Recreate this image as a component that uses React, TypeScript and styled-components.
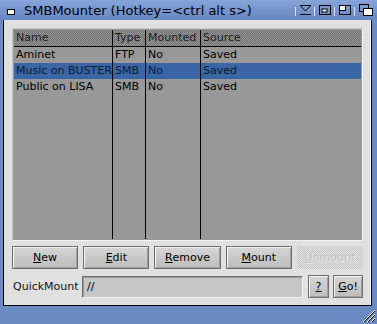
import styled, { createGlobalStyle } from 'styled-components'

const GlobalStyle = createGlobalStyle`
  html, body {
    margin: 0;
    padding: 0;
    background: #6c8cc6;
  }
  * {
    box-sizing: border-box;
  }
`

const Window = styled.div`
  width: 377px;
  height: 324px;
  display: flex;
  flex-direction: column;
  background: #6b8bc5;
  font-family: 'DejaVu Sans', 'Liberation Sans', sans-serif;
  font-size: 11px;
  color: #000;
`

const TitleBar = styled.div`
  height: 20px;
  display: flex;
  align-items: center;
  padding-left: 7px;
  background: linear-gradient(#86a4d8, #6686c2);
`

const CloseGadget = styled.div`
  width: 8px;
  height: 6px;
  margin-top: 4px;
  border: 1px solid #000;
  background: #fff;
`

const Title = styled.div`
  flex: 1;
  margin-left: 9px;
  white-space: nowrap;
  font-size: 13px;
`

const Gadgets = styled.div`
  display: flex;
  align-items: center;
  height: 100%;
`

const GadgetSep = styled.div`
  width: 1px;
  height: 9px;
  margin-top: 3px;
  background: #d8e2f4;
`

const Gadget = styled.div<{ $w: number }>`
  width: ${({ $w }) => $w}px;
  height: 20px;
  display: flex;
  align-items: center;
  justify-content: center;
`

const Body = styled.div`
  flex: 1;
  display: flex;
  flex-direction: column;
  gap: 4px;
  margin: 0 5px 0 3px;
  padding: 8px 8px 7px 8px;
  background: #e0e0e0;
  border-left: 1px solid #000;
  border-right: 1px solid #000;
  border-bottom: 1px solid #000;
  box-shadow: inset -1px 0 #fff;
`

const List = styled.div`
  flex: 1;
  display: flex;
  padding: 1px;
  background: #989898;
  border-top: 1px solid #c8c8c8;
  border-left: 1px solid #c8c8c8;
  border-right: 1px solid #f4f4f4;
  border-bottom: 1px solid #f4f4f4;
`

const Column = styled.div<{ $w?: number; $last?: boolean }>`
  ${({ $w }) => ($w ? `width: ${$w}px;` : 'flex: 1;')}
  display: flex;
  flex-direction: column;
  border-right: ${({ $last }) => ($last ? 'none' : '1px solid #000')};
`

const HeaderCell = styled.div`
  height: 17px;
  line-height: 16px;
  padding-left: 2px;
  color: #1a1a1a;
  background-color: #868686;
  background-image: repeating-conic-gradient(#9a9a9a 0% 25%, #6e6e6e 0% 50%);
  background-size: 2px 2px;
  border-bottom: 1px solid #000;
  white-space: nowrap;
  overflow: hidden;
`

const Cell = styled.div<{ $selected?: boolean }>`
  height: 16px;
  line-height: 16px;
  padding-left: 2px;
  white-space: nowrap;
  overflow: hidden;
  color: ${({ $selected }) => ($selected ? '#0c1a30' : '#000')};
  background: ${({ $selected }) => ($selected ? '#3b66a6' : 'transparent')};
`

const ButtonRow = styled.div`
  display: flex;
  gap: 5px;
  margin-top: 1px;
`

const Button = styled.div<{ $w?: number; $disabled?: boolean }>`
  ${({ $w }) => ($w ? `width: ${$w}px;` : 'flex: 1;')}
  height: 23px;
  display: flex;
  align-items: center;
  justify-content: center;
  color: ${({ $disabled }) => ($disabled ? '#c4c4c4' : '#000')};
  border: 1px solid ${({ $disabled }) => ($disabled ? 'transparent' : '#6e6e6e')};
  background: ${({ $disabled }) =>
    $disabled
      ? 'repeating-conic-gradient(#c6c6c6 0% 25%, #e2e2e2 0% 50%) 0 0 / 2px 2px'
      : 'linear-gradient(#d6d6d6, #bdbdbd)'};
  box-shadow: ${({ $disabled }) =>
    $disabled ? 'none' : 'inset 1px 1px #f2f2f2, inset -1px -1px #a0a0a0'};
  text-shadow: ${({ $disabled }) => ($disabled ? '1px 1px #e8e8e8' : 'none')};
`

const Key = styled.span`
  text-decoration: underline;
`

const QuickRow = styled.div`
  display: flex;
  align-items: center;
  gap: 4px;
  margin-top: 2px;
`

const Label = styled.div`
  width: 66px;
  padding-left: 1px;
  white-space: nowrap;
  color: #111;
`

const Input = styled.div`
  flex: 1;
  height: 22px;
  margin-right: 1px;
  padding-left: 4px;
  display: flex;
  align-items: center;
  background: #c6c6c6;
  border-top: 1px solid #6e6e6e;
  border-left: 1px solid #6e6e6e;
  border-right: 1px solid #f4f4f4;
  border-bottom: 1px solid #f4f4f4;
  box-shadow: inset 1px 1px #999;
`

const BottomBorder = styled.div`
  height: 18px;
  display: flex;
  justify-content: flex-end;
  align-items: flex-end;
  padding: 0 1px 1px 0;
`

const columns = [
  { title: 'Name', w: 99, key: 'name' },
  { title: 'Type', w: 33, key: 'type' },
  { title: 'Mounted', w: 55, key: 'mounted' },
  { title: 'Source', key: 'source' },
] as const

const rows = [
  { name: 'Aminet', type: 'FTP', mounted: 'No', source: 'Saved' },
  { name: 'Music on BUSTER', type: 'SMB', mounted: 'No', source: 'Saved', selected: true },
  { name: 'Public on LISA', type: 'SMB', mounted: 'No', source: 'Saved' },
]

const App = () => {
  return (
    <>
      <GlobalStyle />
      <Window>
        <TitleBar>
          <CloseGadget />
          <Title>SMBMounter (Hotkey=&lt;ctrl alt s&gt;)</Title>
          <Gadgets>
            <GadgetSep />
            <Gadget $w={18}>
              <svg width="11" height="10" viewBox="0 0 11 10">
                <path d="M0 0.5H11M0.5 1L5.5 6L10.5 1M0 9.5H11" stroke="#000" fill="none" />
              </svg>
            </Gadget>
            <GadgetSep />
            <Gadget $w={19}>
              <svg width="12" height="10" viewBox="0 0 12 10">
                <rect x="0.5" y="0.5" width="11" height="9" fill="none" stroke="#000" />
                <rect x="3" y="4" width="5" height="3" fill="#fff" stroke="#000" />
              </svg>
            </Gadget>
            <GadgetSep />
            <Gadget $w={19}>
              <svg width="12" height="10" viewBox="0 0 12 10">
                <rect x="0.5" y="0.5" width="11" height="9" fill="none" stroke="#000" />
                <path d="M1 1H6V5H1Z" fill="#fff" />
                <path d="M6.5 1V5.5H1" stroke="#000" fill="none" />
              </svg>
            </Gadget>
            <GadgetSep />
            <Gadget $w={22}>
              <svg width="14" height="12" viewBox="0 0 14 12">
                <rect x="0.5" y="0.5" width="9" height="7" fill="none" stroke="#000" />
                <rect x="4.5" y="4.5" width="9" height="7" fill="#fff" stroke="#000" />
              </svg>
            </Gadget>
          </Gadgets>
        </TitleBar>
        <Body>
          <List>
            {columns.map((col, i) => (
              <Column key={col.key} $w={'w' in col ? col.w : undefined} $last={i === columns.length - 1}>
                <HeaderCell>{col.title}</HeaderCell>
                {rows.map((row) => (
                  <Cell key={row.name} $selected={row.selected}>
                    {row[col.key]}
                  </Cell>
                ))}
              </Column>
            ))}
          </List>
          <ButtonRow>
            <Button><Key>N</Key>ew</Button>
            <Button><Key>E</Key>dit</Button>
            <Button><Key>R</Key>emove</Button>
            <Button><Key>M</Key>ount</Button>
            <Button $disabled><Key>U</Key>nmount</Button>
          </ButtonRow>
          <QuickRow>
            <Label>QuickMount</Label>
            <Input>//</Input>
            <Button $w={21}><Key>?</Key></Button>
            <Button $w={30}><Key>G</Key>o!</Button>
          </QuickRow>
        </Body>
        <BottomBorder>
          <svg width="14" height="14" viewBox="0 0 14 14">
            <path d="M13 1L1 13M13 5L5 13M13 9L9 13" stroke="#fff" />
            <path d="M13 2L2 13M13 6L6 13M13 10L10 13" stroke="#000" />
          </svg>
        </BottomBorder>
      </Window>
    </>
  )
}

export default App
